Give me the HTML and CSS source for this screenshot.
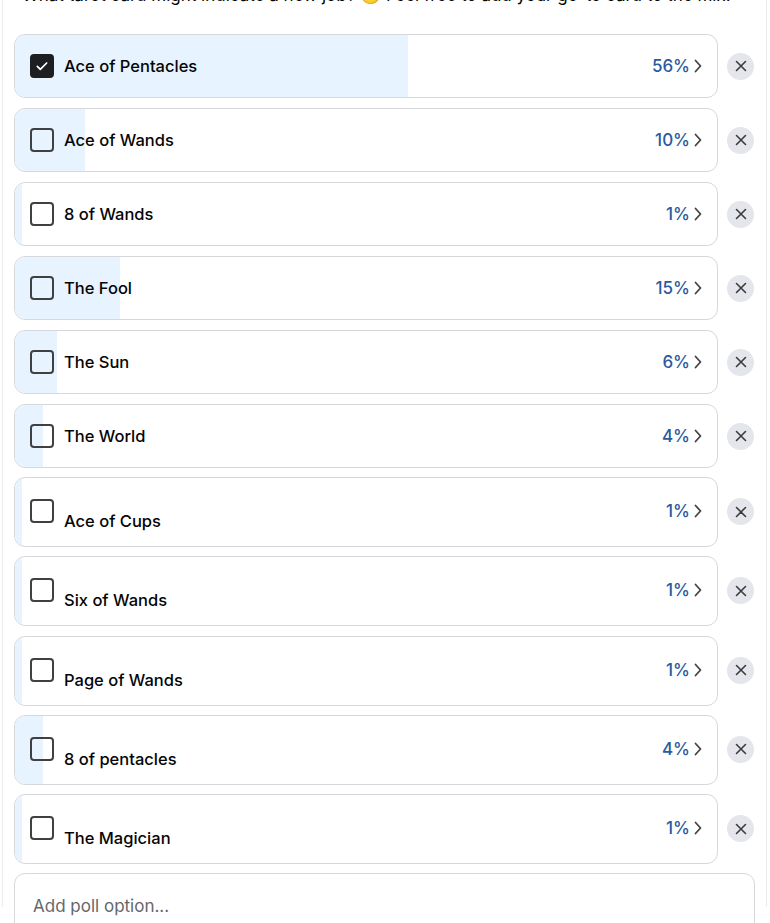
FILE: index.html
```html
<!DOCTYPE html>
<html>
<head>
<meta charset="utf-8">
<link rel="stylesheet" href="styles.css">
</head>
<body>
<div class="panel">
  <p class="question">What tarot card might indicate a new job? 😉 Feel free to add your go-to card to the mix.</p>
  <div class="options">
    <div class="row">
      <div class="card">
        <div class="fill" style="width:56%"></div>
        <span class="box checked"><svg viewBox="0 0 24 24" width="16" height="16"><path d="M5 12.5l4.5 4.5L19 7.5" fill="none" stroke="#fff" stroke-width="2.6" stroke-linecap="round" stroke-linejoin="round"/></svg></span>
        <span class="label">Ace of Pentacles</span>
        <span class="pct">56%<svg class="chev" viewBox="0 0 8 14" width="8" height="14"><path d="M1.5 1.5L6.5 7l-5 5.5" fill="none" stroke="#444" stroke-width="1.8" stroke-linecap="round" stroke-linejoin="round"/></svg></span>
      </div>
      <button class="remove"><svg viewBox="0 0 12 12" width="12" height="12"><path d="M1.5 1.5l9 9M10.5 1.5l-9 9" stroke="#3a3b3c" stroke-width="1.6" stroke-linecap="round"/></svg></button>
    </div>
    <div class="row">
      <div class="card">
        <div class="fill" style="width:10%"></div>
        <span class="box"></span>
        <span class="label">Ace of Wands</span>
        <span class="pct">10%<svg class="chev" viewBox="0 0 8 14" width="8" height="14"><path d="M1.5 1.5L6.5 7l-5 5.5" fill="none" stroke="#444" stroke-width="1.8" stroke-linecap="round" stroke-linejoin="round"/></svg></span>
      </div>
      <button class="remove"><svg viewBox="0 0 12 12" width="12" height="12"><path d="M1.5 1.5l9 9M10.5 1.5l-9 9" stroke="#3a3b3c" stroke-width="1.6" stroke-linecap="round"/></svg></button>
    </div>
    <div class="row">
      <div class="card">
        <div class="fill" style="width:1%"></div>
        <span class="box"></span>
        <span class="label">8 of Wands</span>
        <span class="pct">1%<svg class="chev" viewBox="0 0 8 14" width="8" height="14"><path d="M1.5 1.5L6.5 7l-5 5.5" fill="none" stroke="#444" stroke-width="1.8" stroke-linecap="round" stroke-linejoin="round"/></svg></span>
      </div>
      <button class="remove"><svg viewBox="0 0 12 12" width="12" height="12"><path d="M1.5 1.5l9 9M10.5 1.5l-9 9" stroke="#3a3b3c" stroke-width="1.6" stroke-linecap="round"/></svg></button>
    </div>
    <div class="row">
      <div class="card">
        <div class="fill" style="width:15%"></div>
        <span class="box"></span>
        <span class="label">The Fool</span>
        <span class="pct">15%<svg class="chev" viewBox="0 0 8 14" width="8" height="14"><path d="M1.5 1.5L6.5 7l-5 5.5" fill="none" stroke="#444" stroke-width="1.8" stroke-linecap="round" stroke-linejoin="round"/></svg></span>
      </div>
      <button class="remove"><svg viewBox="0 0 12 12" width="12" height="12"><path d="M1.5 1.5l9 9M10.5 1.5l-9 9" stroke="#3a3b3c" stroke-width="1.6" stroke-linecap="round"/></svg></button>
    </div>
    <div class="row">
      <div class="card">
        <div class="fill" style="width:6%"></div>
        <span class="box"></span>
        <span class="label">The Sun</span>
        <span class="pct">6%<svg class="chev" viewBox="0 0 8 14" width="8" height="14"><path d="M1.5 1.5L6.5 7l-5 5.5" fill="none" stroke="#444" stroke-width="1.8" stroke-linecap="round" stroke-linejoin="round"/></svg></span>
      </div>
      <button class="remove"><svg viewBox="0 0 12 12" width="12" height="12"><path d="M1.5 1.5l9 9M10.5 1.5l-9 9" stroke="#3a3b3c" stroke-width="1.6" stroke-linecap="round"/></svg></button>
    </div>
    <div class="row">
      <div class="card">
        <div class="fill" style="width:4%"></div>
        <span class="box"></span>
        <span class="label">The World</span>
        <span class="pct">4%<svg class="chev" viewBox="0 0 8 14" width="8" height="14"><path d="M1.5 1.5L6.5 7l-5 5.5" fill="none" stroke="#444" stroke-width="1.8" stroke-linecap="round" stroke-linejoin="round"/></svg></span>
      </div>
      <button class="remove"><svg viewBox="0 0 12 12" width="12" height="12"><path d="M1.5 1.5l9 9M10.5 1.5l-9 9" stroke="#3a3b3c" stroke-width="1.6" stroke-linecap="round"/></svg></button>
    </div>
    <div class="row tall">
      <div class="card">
        <div class="fill" style="width:1%"></div>
        <span class="box"></span>
        <span class="label">Ace of Cups</span>
        <span class="pct">1%<svg class="chev" viewBox="0 0 8 14" width="8" height="14"><path d="M1.5 1.5L6.5 7l-5 5.5" fill="none" stroke="#444" stroke-width="1.8" stroke-linecap="round" stroke-linejoin="round"/></svg></span>
      </div>
      <button class="remove"><svg viewBox="0 0 12 12" width="12" height="12"><path d="M1.5 1.5l9 9M10.5 1.5l-9 9" stroke="#3a3b3c" stroke-width="1.6" stroke-linecap="round"/></svg></button>
    </div>
    <div class="row tall">
      <div class="card">
        <div class="fill" style="width:1%"></div>
        <span class="box"></span>
        <span class="label">Six of Wands</span>
        <span class="pct">1%<svg class="chev" viewBox="0 0 8 14" width="8" height="14"><path d="M1.5 1.5L6.5 7l-5 5.5" fill="none" stroke="#444" stroke-width="1.8" stroke-linecap="round" stroke-linejoin="round"/></svg></span>
      </div>
      <button class="remove"><svg viewBox="0 0 12 12" width="12" height="12"><path d="M1.5 1.5l9 9M10.5 1.5l-9 9" stroke="#3a3b3c" stroke-width="1.6" stroke-linecap="round"/></svg></button>
    </div>
    <div class="row tall">
      <div class="card">
        <div class="fill" style="width:1%"></div>
        <span class="box"></span>
        <span class="label">Page of Wands</span>
        <span class="pct">1%<svg class="chev" viewBox="0 0 8 14" width="8" height="14"><path d="M1.5 1.5L6.5 7l-5 5.5" fill="none" stroke="#444" stroke-width="1.8" stroke-linecap="round" stroke-linejoin="round"/></svg></span>
      </div>
      <button class="remove"><svg viewBox="0 0 12 12" width="12" height="12"><path d="M1.5 1.5l9 9M10.5 1.5l-9 9" stroke="#3a3b3c" stroke-width="1.6" stroke-linecap="round"/></svg></button>
    </div>
    <div class="row tall">
      <div class="card">
        <div class="fill" style="width:4%"></div>
        <span class="box"></span>
        <span class="label">8 of pentacles</span>
        <span class="pct">4%<svg class="chev" viewBox="0 0 8 14" width="8" height="14"><path d="M1.5 1.5L6.5 7l-5 5.5" fill="none" stroke="#444" stroke-width="1.8" stroke-linecap="round" stroke-linejoin="round"/></svg></span>
      </div>
      <button class="remove"><svg viewBox="0 0 12 12" width="12" height="12"><path d="M1.5 1.5l9 9M10.5 1.5l-9 9" stroke="#3a3b3c" stroke-width="1.6" stroke-linecap="round"/></svg></button>
    </div>
    <div class="row tall">
      <div class="card">
        <div class="fill" style="width:1%"></div>
        <span class="box"></span>
        <span class="label">The Magician</span>
        <span class="pct">1%<svg class="chev" viewBox="0 0 8 14" width="8" height="14"><path d="M1.5 1.5L6.5 7l-5 5.5" fill="none" stroke="#444" stroke-width="1.8" stroke-linecap="round" stroke-linejoin="round"/></svg></span>
      </div>
      <button class="remove"><svg viewBox="0 0 12 12" width="12" height="12"><path d="M1.5 1.5l9 9M10.5 1.5l-9 9" stroke="#3a3b3c" stroke-width="1.6" stroke-linecap="round"/></svg></button>
    </div>
  </div>
  <div class="add">Add poll option...</div>
</div>
</body>
</html>
```
FILE: styles.css
```css
* { box-sizing: border-box; }
html, body { margin: 0; padding: 0; background: #fff; overflow: hidden; }
body {
  font-family: Inter, "Liberation Sans", Arial, sans-serif;
  color: #050505;
  height: 923px;
}
.panel {
  margin: 0 3px 0 2px;
  border-left: 1px solid #ececec;
  border-right: 1px solid #ececec;
  padding: 0 0 0 11px;
  height: 923px;
}
.question {
  margin: -16px 0 0 8px;
  font-size: 17px;
  line-height: 22px;
  white-space: nowrap;
  overflow: hidden;
  color: #050505;
}
.options {
  margin-top: 28px;
  display: flex;
  flex-direction: column;
  gap: 10px;
}
.row {
  display: flex;
  align-items: center;
  gap: 9px;
}
.card {
  position: relative;
  width: 704px;
  height: 64px;
  border: 1px solid #d6d8dc;
  border-radius: 11px;
  display: flex;
  align-items: center;
  padding: 0 15px 0 15px;
  overflow: hidden;
  background: #fff;
}
.fill {
  position: absolute;
  left: 0; top: 0; bottom: 0;
  background: #e7f3ff;
}
.box, .label, .pct { position: relative; }
.box {
  width: 24px; height: 24px;
  border: 2px solid #3e4042;
  border-radius: 4px;
  flex: none;
  display: flex;
  align-items: center;
  justify-content: center;
}
.box.checked { background: #1c1e21; border-color: #1c1e21; }
.label {
  margin-left: 10px;
  font-size: 16.5px;
  font-weight: 500;
  letter-spacing: 0;
}
.pct {
  margin-left: auto;
  display: flex;
  align-items: center;
  gap: 4px;
  font-size: 17px;
  font-weight: 500;
  color: #2a5aa0;
}
.remove {
  width: 27px; height: 27px;
  border-radius: 50%;
  border: 0;
  background: #e4e6eb;
  padding: 0;
  display: flex;
  align-items: center;
  justify-content: center;
}
.row:nth-child(6) { margin-bottom: -1px; }
.row.tall + .row.tall { margin-top: -0.75px; }
.row.tall .card {
  height: 70px;
  align-items: flex-start;
  padding-top: 21px;
}
.row.tall .label { margin-top: 12px; }
.row.tall .pct { margin-top: 2px; }
.row.tall .remove { margin-top: -1px; }
.add {
  margin-top: 9px;
  width: 741px;
  height: 70px;
  border: 1px solid #d6d8dc;
  border-radius: 11px;
  padding: 22px 0 0 18px;
  font-size: 17px;
  color: #65676b;
}
```
